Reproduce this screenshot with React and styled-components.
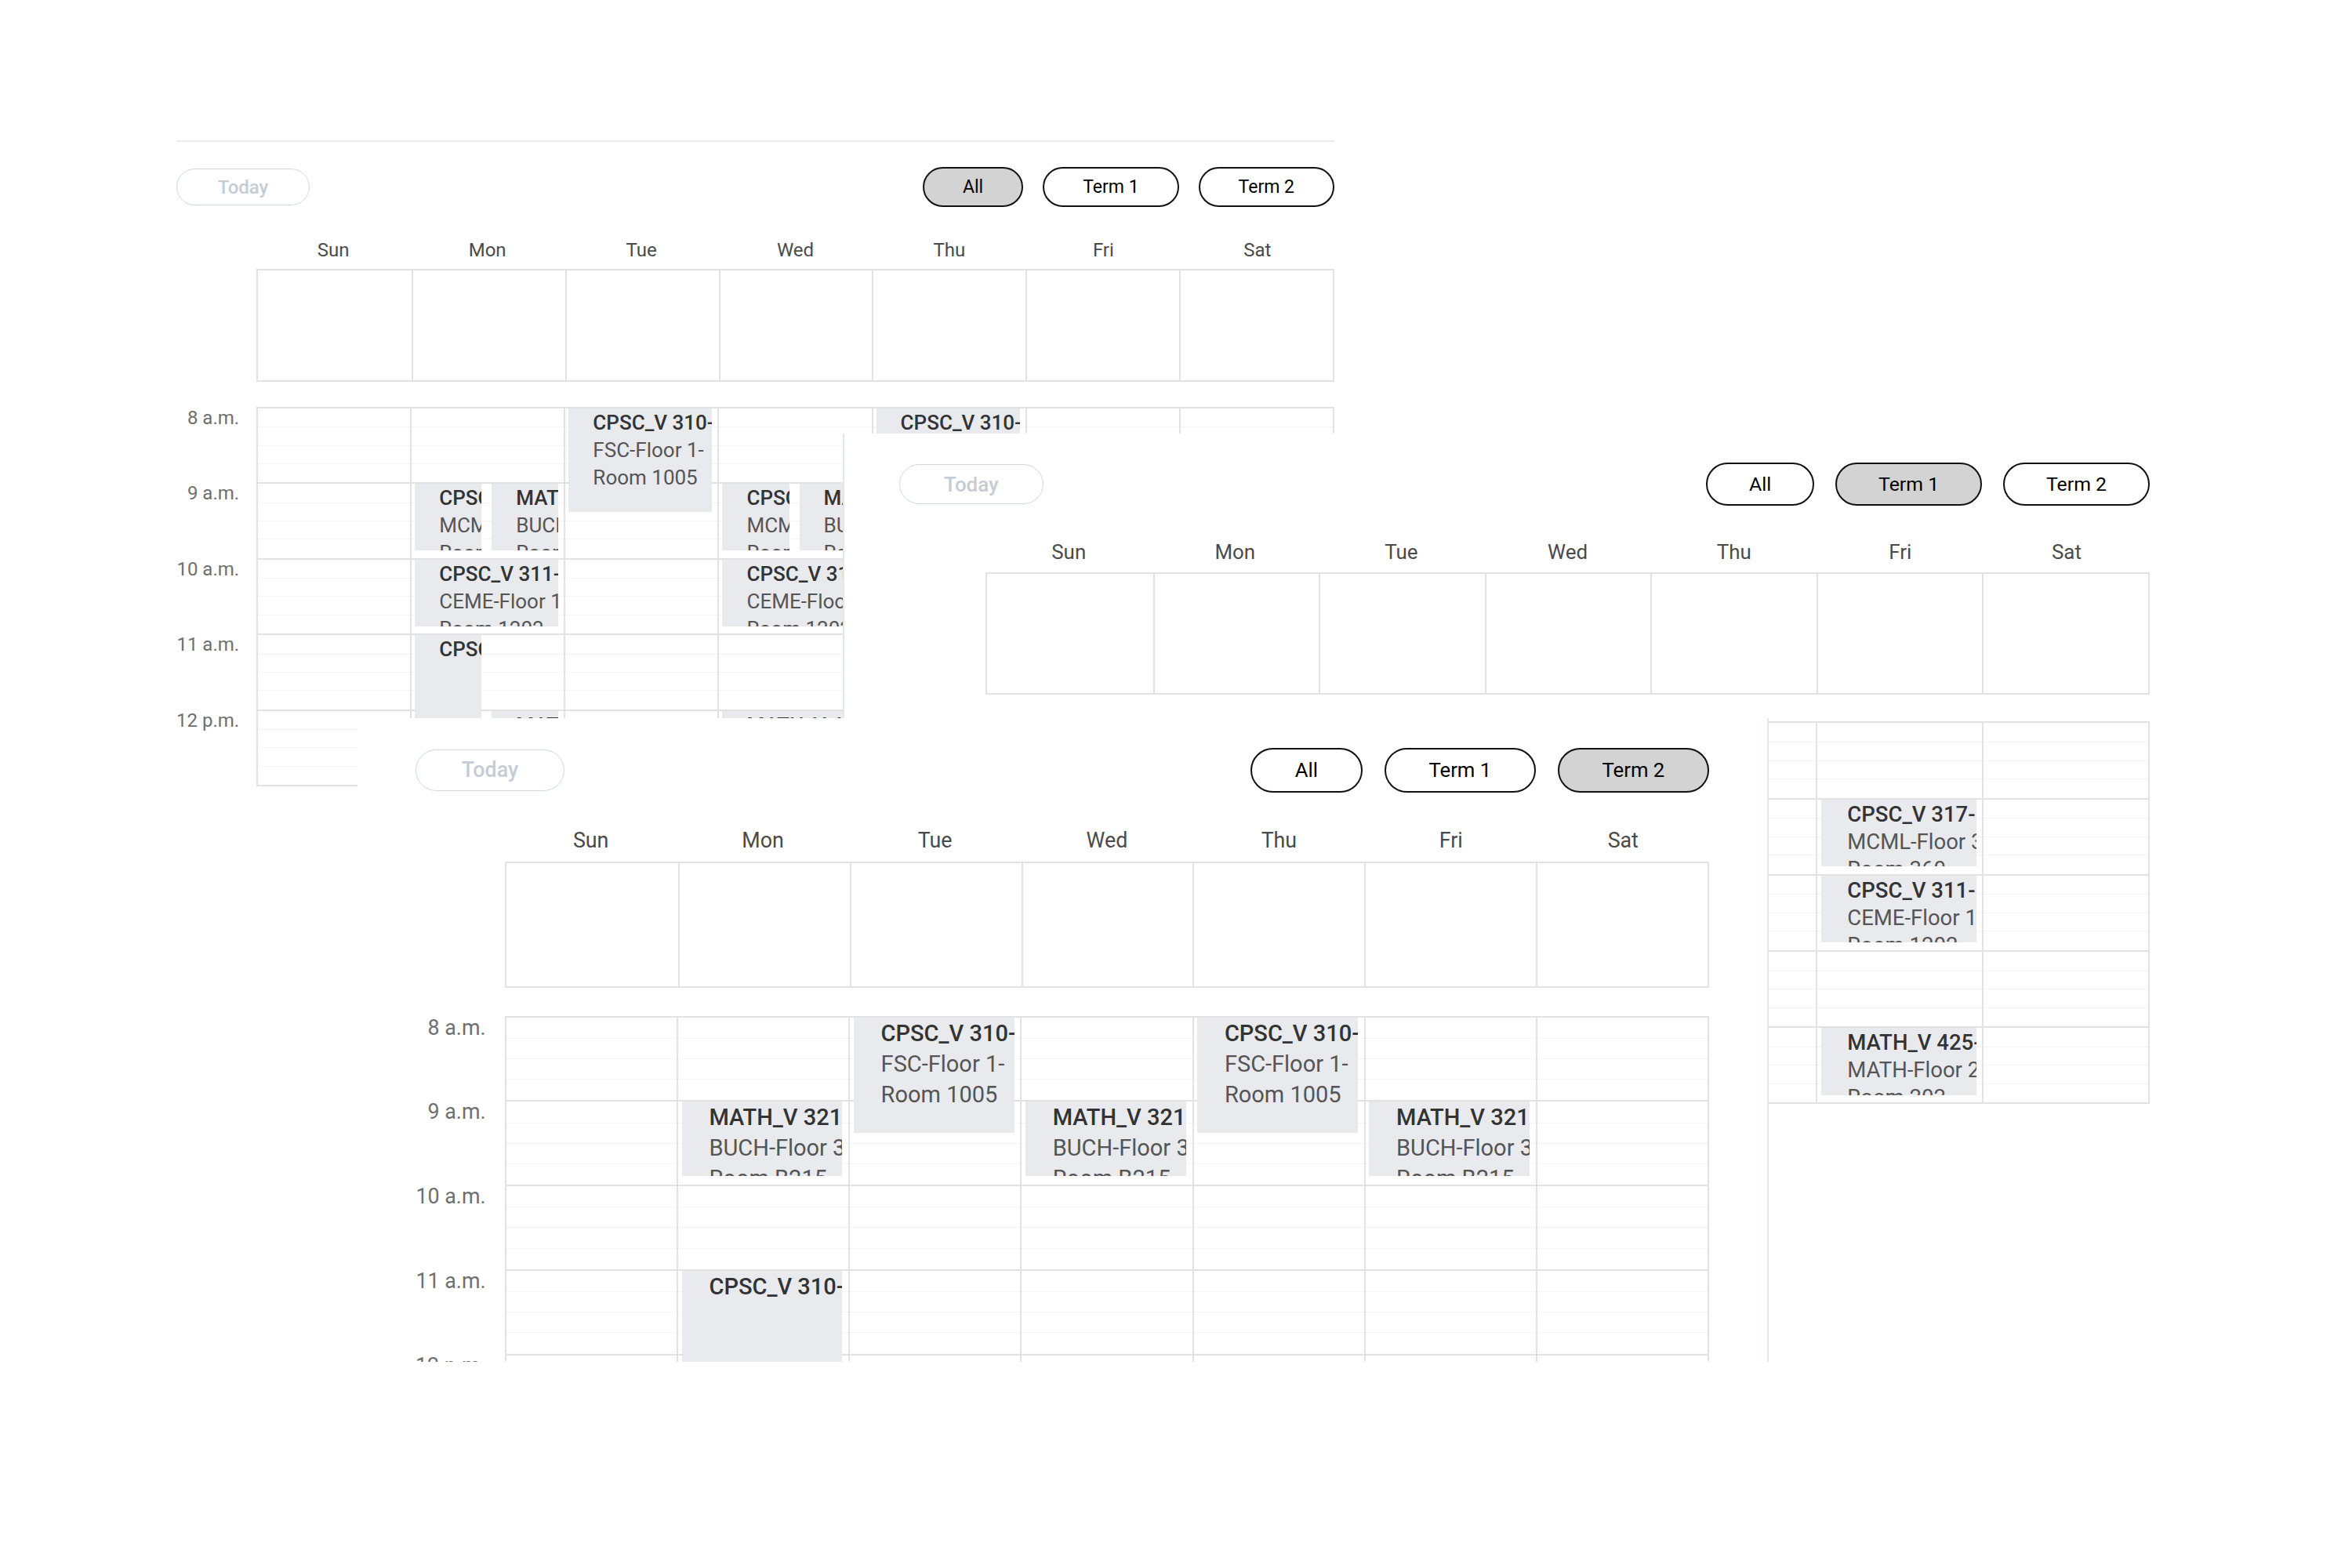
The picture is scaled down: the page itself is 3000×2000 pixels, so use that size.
import React from 'react';
import styled, { createGlobalStyle } from 'styled-components';

const FONT = `Roboto, "Noto Sans", "Liberation Sans", Arial, sans-serif`;
const LINE = '#e2e2e2';
const DAYS = ['Sun', 'Mon', 'Tue', 'Wed', 'Thu', 'Fri', 'Sat'];
const HOURS = ['8 a.m.', '9 a.m.', '10 a.m.', '11 a.m.', '12 p.m.'];

const GlobalStyle = createGlobalStyle`
  html, body {
    margin: 0;
    padding: 0;
    background: #fff;
  }
  body {
    font-family: ${FONT};
  }
`;

const Page = styled.div`
  position: relative;
  width: 3000px;
  height: 2000px;
  overflow: hidden;
  background: #fff;
`;

// each screenshot of the calendar is a "window" laid over the previous one
const Panel = styled.section`
  position: absolute;
  left: ${p => p.$x}px;
  top: ${p => p.$y}px;
  width: ${p => p.$w}px;
  ${p => (p.$h ? `height: ${p.$h}px; overflow: hidden;` : '')}
  z-index: ${p => p.$z};
  box-sizing: border-box;
  padding: ${p => p.$padTop}px ${p => p.$pad}px 0;
  background: #fff;
  border-left: ${p => (p.$borderLeft ? '2px solid #e3e6ea' : '0')};
  border-right: ${p => (p.$borderRight ? '2px solid #e3e6ea' : '0')};
`;

const Rule = styled.div`
  height: 2px;
  background: #e8eaed;
  margin-bottom: ${p => 32 * p.$s}px;
`;

const Toolbar = styled.div`
  display: flex;
  align-items: center;
  justify-content: space-between;
  height: ${p => 51 * p.$s}px;
`;

const TodayButton = styled.button`
  box-sizing: border-box;
  width: ${p => 170 * p.$s}px;
  height: ${p => 47 * p.$s}px;
  border: ${p => 1.6 * p.$s}px solid #d2d7de;
  border-radius: 999px;
  background: #fff;
  color: #c5ccd5;
  font-family: ${FONT};
  font-weight: 500;
  font-size: ${p => 24 * p.$s}px;
  padding: 0;
`;

const ToggleGroup = styled.div`
  display: flex;
  gap: ${p => 25 * p.$s}px;
`;

const ToggleButton = styled.button`
  box-sizing: border-box;
  height: ${p => 51 * p.$s}px;
  padding: 0 ${p => 49 * p.$s}px;
  border: ${p => 2 * p.$s}px solid #111;
  border-radius: 999px;
  background: ${p => (p.$active ? '#d3d3d3' : '#fff')};
  color: #000;
  font-family: ${FONT};
  font-size: ${p => 23 * p.$s}px;
  white-space: nowrap;
`;

const HeaderRow = styled.div`
  display: grid;
  grid-template-columns: ${p => 102 * p.$s}px repeat(7, 1fr);
  margin-top: ${p => 40 * p.$s}px;
  height: ${p => 30 * p.$s}px;
  line-height: ${p => 30 * p.$s}px;
`;

const DayName = styled.div`
  text-align: center;
  color: #4a4a4a;
  font-size: ${p => 24 * p.$s}px;
`;

const AllDayRow = styled.div`
  display: grid;
  grid-template-columns: ${p => 102 * p.$s}px 1fr;
  margin-top: ${p => 9 * p.$s}px;
  height: ${p => 144 * p.$s}px;
`;

const AllDayCells = styled.div`
  display: grid;
  grid-template-columns: repeat(7, 1fr);
  border: 2px solid ${LINE};
`;

const AllDayCell = styled.div`
  border-left: ${p => (p.$first ? '0' : `2px solid ${LINE}`)};
`;

const TimeGrid = styled.div`
  display: flex;
  margin-top: ${p => 32 * p.$s}px;
`;

const Axis = styled.div`
  flex: 0 0 ${p => 102 * p.$s}px;
`;

const AxisLabel = styled.div`
  height: ${p => p.$rowH}px;
  box-sizing: border-box;
  padding-right: ${p => 22 * p.$s}px;
  text-align: right;
  white-space: nowrap;
  color: #6f6f6f;
  font-size: ${p => 24 * p.$s}px;
  line-height: ${p => 28 * p.$s}px;
`;

const Body = styled.div`
  position: relative;
  flex: 1;
  border-right: 2px solid ${LINE};
  border-bottom: 2px solid ${LINE};
`;

const HourRow = styled.div`
  display: grid;
  grid-template-columns: repeat(7, 1fr);
  box-sizing: border-box;
  height: ${p => p.$rowH}px;
  border-top: 2px solid ${LINE};
`;

const SlotCell = styled.div`
  border-left: 2px solid ${LINE};
  background-image: linear-gradient(#f3f3f3, #f3f3f3), linear-gradient(#f3f3f3, #f3f3f3),
    linear-gradient(#f3f3f3, #f3f3f3);
  background-repeat: no-repeat;
  background-size: 100% 1px;
  background-position: 0 25%, 0 50%, 0 75%;
`;

const EventLayer = styled.div`
  position: absolute;
  inset: 0;
  display: grid;
  grid-template-columns: repeat(7, 1fr);
`;

const DayColumn = styled.div`
  position: relative;
`;

const EventBlock = styled.div`
  position: absolute;
  box-sizing: border-box;
  overflow: hidden;
  background: #e8eaed;
  padding: 1px 0 0 ${p => 31 * p.$s}px;
  font-size: ${p => p.$font}px;
  line-height: ${p => p.$lh}px;
`;

const EventTitle = styled.div`
  font-weight: 500;
  color: #333;
  white-space: nowrap;
`;

const EventText = styled.div`
  color: #555;
  white-space: nowrap;
`;

const weekly = (days, ev) => days.map(day => ({ day, ...ev }));

const CPSC317 = { start: 9, dur: 0.9, title: 'CPSC_V 317-101', lines: ['MCML-Floor 3-', 'Room 360'] };
const CPSC311 = { start: 10, dur: 0.9, title: 'CPSC_V 311-101', lines: ['CEME-Floor 1-', 'Room 1202'] };
const MATH425 = { start: 12, dur: 0.9, title: 'MATH_V 425-201', lines: ['MATH-Floor 2-', 'Room 202'] };
const CPSC310 = { start: 8, dur: 1.39, title: 'CPSC_V 310-101', lines: ['FSC-Floor 1-', 'Room 1005'] };
const MATH321 = { start: 9, dur: 0.9, title: 'MATH_V 321-101', lines: ['BUCH-Floor 3-', 'Room B215'] };
const CPSC310LAB = { day: 1, start: 11, dur: 2, title: 'CPSC_V 310-L1A', lines: [] };

const term1 = [
  ...weekly([1, 3, 5], CPSC317),
  ...weekly([1, 3, 5], CPSC311),
  ...weekly([1, 3, 5], MATH425),
];

const term2 = [
  ...weekly([2, 4], CPSC310),
  ...weekly([1, 3, 5], MATH321),
  CPSC310LAB,
];

const allTerms = [
  ...weekly([1, 3, 5], { ...CPSC317, sub: 0 }),
  ...weekly([1, 3, 5], { ...MATH321, sub: 1 }),
  ...weekly([1, 3, 5], CPSC311),
  ...weekly([2, 4], CPSC310),
  { ...CPSC310LAB, sub: 0 },
  { day: 1, ...MATH425, sub: 1 },
  ...weekly([3, 5], MATH425),
];

function eventBox(ev, s, rowH) {
  const half = `calc((100% - ${26 * s}px) / 2)`;
  const box = {
    top: (ev.start - 8) * rowH + 2,
    height: ev.dur * rowH - 2,
  };
  if (ev.sub === 0) return { ...box, left: 6 * s, width: half };
  if (ev.sub === 1) return { ...box, left: `calc(${19 * s}px + ${half})`, width: half };
  return { ...box, left: 6 * s, right: 7 * s };
}

function Calendar({ s, active, events, rowH, evFont, evLine, rule }) {
  return (
    <>
      {rule && <Rule $s={s} />}
      <Toolbar $s={s}>
        <TodayButton $s={s}>Today</TodayButton>
        <ToggleGroup $s={s}>
          {['All', 'Term 1', 'Term 2'].map(label => (
            <ToggleButton key={label} $s={s} $active={label === active}>
              {label}
            </ToggleButton>
          ))}
        </ToggleGroup>
      </Toolbar>

      <HeaderRow $s={s}>
        <div />
        {DAYS.map(d => (
          <DayName key={d} $s={s}>{d}</DayName>
        ))}
      </HeaderRow>

      <AllDayRow $s={s}>
        <div />
        <AllDayCells>
          {DAYS.map((d, i) => (
            <AllDayCell key={d} $first={i === 0} />
          ))}
        </AllDayCells>
      </AllDayRow>

      <TimeGrid $s={s}>
        <Axis $s={s}>
          {HOURS.map(h => (
            <AxisLabel key={h} $s={s} $rowH={rowH}>{h}</AxisLabel>
          ))}
        </Axis>
        <Body>
          {HOURS.map(h => (
            <HourRow key={h} $rowH={rowH}>
              {DAYS.map(d => (
                <SlotCell key={d} />
              ))}
            </HourRow>
          ))}
          <EventLayer>
            {DAYS.map((d, i) => (
              <DayColumn key={d}>
                {events
                  .filter(ev => ev.day === i)
                  .map((ev, k) => (
                    <EventBlock
                      key={k}
                      $s={s}
                      $font={evFont}
                      $lh={evLine}
                      style={eventBox(ev, s, rowH)}
                    >
                      <EventTitle>{ev.title}</EventTitle>
                      {ev.lines.map(line => (
                        <EventText key={line}>{line}</EventText>
                      ))}
                    </EventBlock>
                  ))}
              </DayColumn>
            ))}
          </EventLayer>
        </Body>
      </TimeGrid>
    </>
  );
}

export default function App() {
  return (
    <>
      <GlobalStyle />
      <Page>
        <Panel $x={155} $y={179} $w={1617} $z={1} $pad={70} $padTop={0}>
          <Calendar s={1} active="All" events={allTerms} rowH={96.4} evFont={26} evLine={35} rule />
        </Panel>

        <Panel $x={1075} $y={553} $w={1737} $z={2} $pad={70} $padTop={37} $borderLeft>
          <Calendar s={1.08} active="Term 1" events={term1} rowH={97.2} evFont={27.5} evLine={35} />
        </Panel>

        <Panel $x={456} $y={916} $w={1800} $h={821} $z={3} $pad={74} $padTop={38} $borderRight>
          <Calendar s={1.117} active="Term 2" events={term2} rowH={107.7} evFont={29} evLine={39} />
        </Panel>
      </Page>
    </>
  );
}
